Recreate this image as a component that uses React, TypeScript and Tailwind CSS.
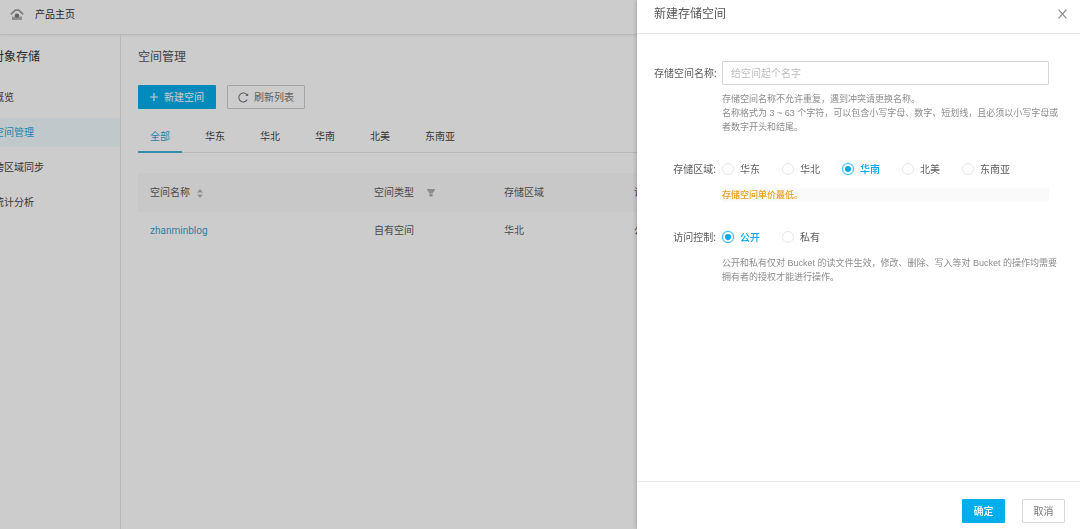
import { useState } from 'react';
import type { ReactNode } from 'react';
import clsx from 'clsx';

const navItems = ['概览', '空间管理', '跨区域同步', '统计分析'];
const tabs = ['全部', '华东', '华北', '华南', '北美', '东南亚'];
const regions = ['华东', '华北', '华南', '北美', '东南亚'];
const accessModes = ['公开', '私有'];

function HomeIcon() {
  return (
    <svg width="14" height="13" viewBox="0 0 14 13" aria-hidden="true">
      <path d="M.8 6.4 5.4 2.2h3.2l4.6 4.2" fill="none" stroke="#9c9c9c" strokeWidth="1.7" />
      <path d="M2 8.6h10V12H2z" fill="#b4b4b4" />
      <circle cx="7" cy="7.6" r="2.2" fill="#777" />
    </svg>
  );
}

function PlusIcon() {
  return (
    <svg width="8" height="8" viewBox="0 0 8 8" aria-hidden="true">
      <path d="M4 0v8M0 4h8" stroke="currentColor" strokeWidth="1.2" />
    </svg>
  );
}

function ReloadIcon() {
  return (
    <svg width="11" height="11" viewBox="0 0 11 11" fill="none" aria-hidden="true">
      <path d="M9.3 7.6A4.5 4.5 0 1 1 9.2 3.2" stroke="currentColor" strokeWidth="1.1" />
      <path d="M10.2 1.2v2.9H7.3z" fill="currentColor" />
    </svg>
  );
}

function SortIcon() {
  return (
    <svg width="6" height="9" viewBox="0 0 6 9" fill="#b4b4b4" aria-hidden="true" className="mt-px">
      <path d="M3 0 6 3.5H0zM3 9 0 5.5h6z" />
    </svg>
  );
}

function FilterIcon() {
  return (
    <svg width="8" height="8" viewBox="0 0 8 8" fill="#b0b0b0" aria-hidden="true">
      <path d="M0 0h8v1L5.6 4.2h-3.2L0 1zM2.4 4.8h3.2v2.8H2.4z" />
    </svg>
  );
}

function CloseIcon() {
  return (
    <svg width="9" height="10" viewBox="0 0 9 10" aria-hidden="true">
      <path d="M.6.6l7.8 8.8M8.4.6.6 9.4" stroke="currentColor" strokeWidth="1.2" />
    </svg>
  );
}

function FieldLabel({ children, htmlFor }: { children: ReactNode; htmlFor?: string }) {
  const cls = 'w-[68px] shrink-0 whitespace-nowrap pr-1.5 text-right text-[#5c5c5c]';
  return htmlFor ? (
    <label htmlFor={htmlFor} className={cls}>{children}:</label>
  ) : (
    <span className={cls}>{children}:</span>
  );
}

function RadioRow({ name, label, options, value, onChange }: {
  name: string;
  label: string;
  options: string[];
  value: string;
  onChange: (v: string) => void;
}) {
  return (
    <div role="radiogroup" aria-label={label} className="flex h-4 items-center">
      <FieldLabel>{label}</FieldLabel>
      <div className="flex gap-[22px]">
        {options.map((option) => (
          <label
            key={option}
            className={clsx(
              'flex items-center gap-1.5 whitespace-nowrap',
              option === value ? 'font-medium text-[#00a7ea]' : 'text-[#5c5c5c]',
            )}
          >
            <input
              type="radio"
              name={name}
              checked={option === value}
              onChange={() => onChange(option)}
              className="grid size-3 appearance-none place-items-center rounded-full border border-[#e6e6e6] bg-white before:size-1.5 before:rounded-full checked:border-[#3bbcf0] checked:shadow-[0_0_2px_#8ad8f7] checked:before:bg-[#00a7ea]"
            />
            {option}
          </label>
        ))}
      </div>
    </div>
  );
}

function HomePage() {
  const [tab, setTab] = useState('全部');
  return (
    <div className="flex min-h-screen flex-col bg-white">
      <header className="flex h-[35px] shrink-0 items-center gap-[11px] border-b border-[#e6e6e6] pb-1.5 pl-2.5 shadow-[0_1px_2px_rgba(0,0,0,0.06)]">
        <HomeIcon />
        <a href="#home" className="text-[#333]">产品主页</a>
      </header>
      <div className="flex grow">
        <aside className="w-[121px] shrink-0 overflow-hidden border-r border-[#e6e6e6]">
          <h2 className="-ml-2 mt-3.5 h-4 text-xs leading-4 text-[#333]">对象存储</h2>
          <nav className="mt-[18px] flex flex-col gap-1.5">
            {navItems.map((item) => (
              <a
                key={item}
                href="#nav"
                className={clsx(
                  '-ml-1.5 flex h-[29px] items-center',
                  item === '空间管理' ? 'bg-[#f0fbff] text-[#2aa7d9]' : 'text-[#444]',
                )}
              >
                {item}
              </a>
            ))}
          </nav>
        </aside>
        <main className="min-w-0 grow px-[17px] pt-3.5 text-[#5c5c5c]">
          <h1 className="h-4 text-xs leading-4 text-[#555]">空间管理</h1>
          <div className="mt-5 flex gap-[11px]">
            <button className="flex h-6 w-[78px] items-center justify-center gap-1.5 rounded-[1px] bg-[#00aeec] text-white">
              <PlusIcon />新建空间
            </button>
            <button className="flex h-6 w-[78px] items-center justify-center gap-[5px] rounded-[1px] border border-[#cfcfcf] text-[#777]">
              <ReloadIcon />刷新列表
            </button>
          </div>
          <div role="tablist" className="mt-3 flex h-8 gap-[11px] border-b border-[#e6e6e6]">
            {tabs.map((t) => (
              <button
                key={t}
                role="tab"
                aria-selected={t === tab}
                onClick={() => setTab(t)}
                className={clsx(
                  '-mb-px flex h-8 items-center border-b-2 px-3 pt-px',
                  t === tab ? 'border-[#45b0dd] text-[#2aa7d9]' : 'border-transparent text-[#444]',
                )}
              >
                {t}
              </button>
            ))}
          </div>
          <table className="mt-5 w-full table-fixed border-collapse text-left">
            <thead>
              <tr className="h-[39px] bg-[#fafafa]">
                <th className="w-[224px] pl-3 font-normal">
                  <span className="flex items-center gap-[7px]">空间名称<SortIcon /></span>
                </th>
                <th className="w-[130px] pl-3 font-normal">
                  <span className="flex items-center gap-[13px]">空间类型<FilterIcon /></span>
                </th>
                <th className="w-[130px] pl-3 font-normal">存储区域</th>
                <th className="pl-3 font-normal">访问控制</th>
              </tr>
            </thead>
            <tbody>
              <tr className="h-9">
                <td className="pl-3"><a href="#bucket" className='font-[Roboto,"Noto_Sans",sans-serif] text-[#3a9fd0]'>zhanminblog</a></td>
                <td className="pl-3">自有空间</td>
                <td className="pl-3">华北</td>
                <td className="pl-3">公开</td>
              </tr>
            </tbody>
          </table>
        </main>
      </div>
    </div>
  );
}

function CreateDrawer() {
  const [region, setRegion] = useState('华南');
  const [access, setAccess] = useState('公开');
  const hint = 'ml-[68px] whitespace-nowrap font-["Liberation_Sans","Noto_Sans_CJK_SC",sans-serif] text-[9px] leading-[14px] text-[#8c8c8c]';
  return (
    <section
      role="dialog"
      aria-labelledby="drawer-title"
      className="fixed inset-y-0 right-0 flex w-[443px] max-w-full flex-col bg-white shadow-[-1px_0_4px_rgba(0,0,0,0.2)]"
    >
      <header className="flex h-[34px] shrink-0 items-center justify-between border-b border-[#e8e8e8] pb-[5px] pl-[17px] pr-[13px]">
        <h2 id="drawer-title" className="text-xs text-[#555]">新建存储空间</h2>
        <button aria-label="关闭" className="text-[#888]"><CloseIcon /></button>
      </header>
      <form className="min-h-0 grow overflow-x-hidden pl-[17px] pr-3 pt-[27px]">
        <div className="flex items-center pr-[19px]">
          <FieldLabel htmlFor="bucket-name">存储空间名称</FieldLabel>
          <input
            id="bucket-name"
            placeholder="给空间起个名字"
            className="h-6 min-w-0 grow rounded-[1px] border border-[#d6d6d6] px-2 outline-none placeholder:text-[#bdbdbd]"
          />
        </div>
        <p className={clsx(hint, 'mt-[7px]')}>
          存储空间名称不允许重复，遇到冲突请更换名称。<br />
          名称格式为 3 ~ 63 个字符，可以包含小写字母、数字、短划线，且必须以小写字母或<br />
          者数字开头和结尾。
        </p>
        <div className="mt-[27px]">
          <RadioRow name="region" label="存储区域" options={regions} value={region} onChange={setRegion} />
          <p className="ml-[68px] mr-[19px] mt-[11px] bg-[#fafafa] text-[9px] font-medium leading-[14px] text-[#e8a020]">
            存储空间单价最低。
          </p>
        </div>
        <div className="mt-[27px]">
          <RadioRow name="access" label="访问控制" options={accessModes} value={access} onChange={setAccess} />
          <p className={clsx(hint, 'mt-[11px]')}>
            公开和私有仅对 Bucket 的读文件生效，修改、删除、写入等对 Bucket 的操作均需要<br />
            拥有者的授权才能进行操作。
          </p>
        </div>
      </form>
      <footer className="flex shrink-0 justify-end gap-[17px] border-t border-[#ececec] pb-1.5 pr-[15px] pt-[17px]">
        <button className="h-6 w-[43px] rounded-[1px] bg-[#00aeec] font-medium text-white">确定</button>
        <button className="h-6 w-[43px] rounded-[1px] border border-[#d9d9d9] text-[#777]">取消</button>
      </footer>
    </section>
  );
}

export default function App() {
  return (
    <div className='font-["Noto_Sans","Noto_Sans_CJK_SC",sans-serif] text-[10px] leading-[15px]' lang="zh-CN">
      <HomePage />
      <div className="fixed inset-0 bg-black/20" />
      <CreateDrawer />
    </div>
  );
}
